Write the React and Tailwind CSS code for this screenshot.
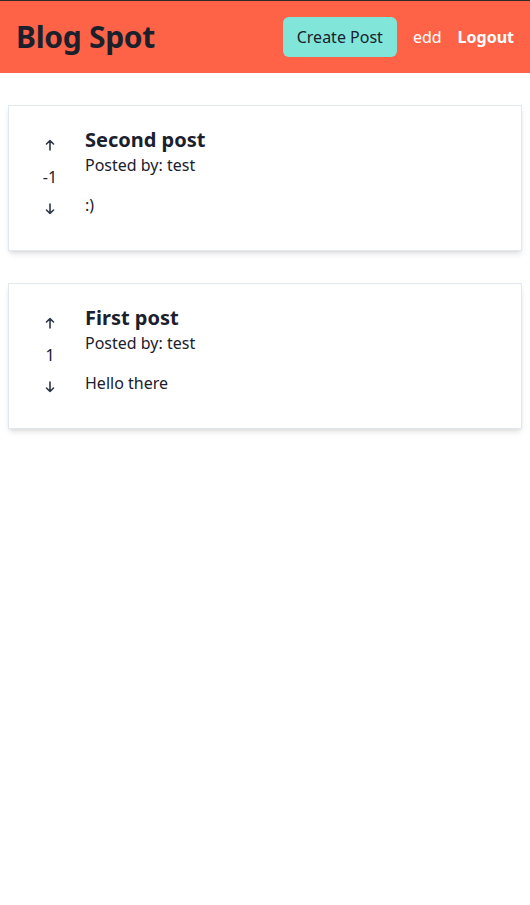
const posts = [
  { id: 2, title: "Second post", author: "test", votes: -1, body: ":)" },
  { id: 1, title: "First post", author: "test", votes: 1, body: "Hello there" },
];

function Arrow({ down }) {
  return (
    <svg width="10" height="12" viewBox="0 0 10 12" fill="none" stroke="#2d3748" strokeWidth="1.6" strokeLinecap="round" strokeLinejoin="round" className={down ? "rotate-180" : ""}>
      <path d="M5 11V1.5M1.5 5L5 1.5L8.5 5" />
    </svg>
  );
}

function PostCard({ post }) {
  return (
    <div className="flex mx-2 border border-[#e2e8f0] bg-white shadow-md p-5">
      <div className="flex flex-col items-center gap-2 w-[42px] pt-[7px] pb-[9px] text-[#1a202c]">
        <button className="h-6 flex items-center justify-center">
          <Arrow />
        </button>
        <span className="h-6 leading-6">{post.votes}</span>
        <button className="h-6 flex items-center justify-center">
          <Arrow down />
        </button>
      </div>
      <div className="ml-[14px] mt-px text-[#1a202c]">
        <h2 className="text-xl font-bold leading-[26px]">{post.title}</h2>
        <p className="leading-6">Posted by: {post.author}</p>
        <p className="mt-4 leading-6">{post.body}</p>
      </div>
    </div>
  );
}

export default function App() {
  return (
    <div className="min-h-screen bg-white font-['Noto_Sans',sans-serif] text-base">
      <header className="flex items-center justify-between bg-[#ff6347] border-t border-[#2d2d2d] p-4">
        <h1 className="text-3xl font-bold text-[#1a202c] leading-9 tracking-[-0.3px]">Blog Spot</h1>
        <nav className="flex items-center gap-4">
          <button className="bg-[#81e6d9] text-[#1a202c] rounded-md px-[14px] py-2 leading-6">Create Post</button>
          <span className="text-white">edd</span>
          <button className="text-white font-bold">Logout</button>
        </nav>
      </header>
      <main className="flex flex-col gap-8 pt-8">
        {posts.map((p) => (
          <PostCard key={p.id} post={p} />
        ))}
      </main>
    </div>
  );
}
